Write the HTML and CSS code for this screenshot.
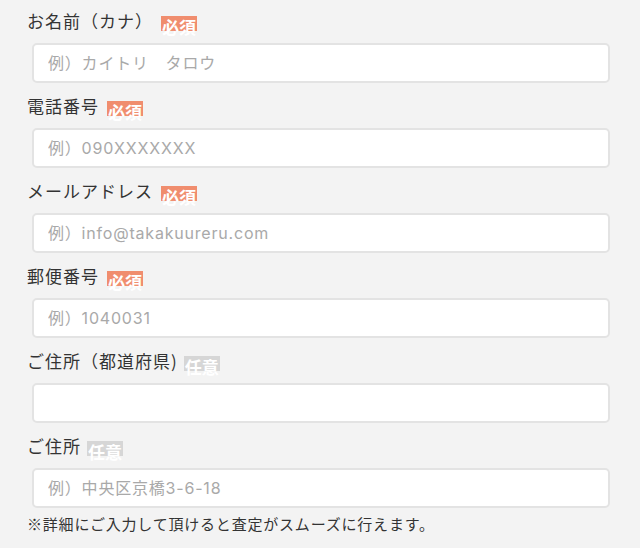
FILE: index.html
```html
<!DOCTYPE html>
<html lang="ja">
<head>
    <meta charset="UTF-8">
    <meta name="viewport" content="width=device-width, initial-scale=1.0">
    <title>お申し込みフォーム</title>
    <link rel="stylesheet" href="styles.css">
</head>
<body>
    <form class="form">
        <div class="field">
            <label class="label">お名前（カナ）<span class="badge req">必須</span></label>
            <input class="input" type="text" placeholder="例）カイトリ　タロウ">
        </div>
        <div class="field">
            <label class="label">電話番号<span class="badge req">必須</span></label>
            <input class="input" type="tel" placeholder="例）090XXXXXXX">
        </div>
        <div class="field">
            <label class="label">メールアドレス<span class="badge req">必須</span></label>
            <input class="input" type="email" placeholder="例）info@takakuureru.com">
        </div>
        <div class="field">
            <label class="label">郵便番号<span class="badge req">必須</span></label>
            <input class="input" type="text" placeholder="例）1040031">
        </div>
        <div class="field">
            <label class="label">ご住所（都道府県)<span class="badge opt">任意</span></label>
            <input class="input" type="text">
        </div>
        <div class="field">
            <label class="label">ご住所<span class="badge opt">任意</span></label>
            <input class="input" type="text" placeholder="例）中央区京橋3-6-18">
        </div>
        <p class="note">※詳細にご入力して頂けると査定がスムーズに行えます。</p>
    </form>
</body>
</html>
```

FILE: styles.css
```css
body { margin: 0; background: #f3f3f3; font-family: "Noto Sans CJK JP", "Noto Sans", sans-serif; color: #333; }
.form { padding: 11px 30px 0 27px; }
.field { margin-bottom: 13px; }
.label { display: block; font-size: 17px; line-height: 20px; height: 20px; margin-bottom: 12px; letter-spacing: 1px; white-space: nowrap; }
.badge { display: inline-block; vertical-align: top; height: 15px; line-height: 22px; margin-top: 5px; padding: 0 1px; font-size: 17px; font-weight: bold; letter-spacing: 0; color: #fff; }
.req { background: #f08d6e; margin-left: 8px; }
.opt { background: #d6d6d6; margin-left: 6px; }
.input { display: block; box-sizing: border-box; width: 578px; height: 40px; margin-left: 5px; padding: 0 14px; border: 2px solid #e3e3e3; border-radius: 5px; background: #fff; font-family: Inter, "Noto Sans CJK JP", sans-serif; font-size: 16px; letter-spacing: 0.8px; color: #333; outline: none; }
.input::placeholder { color: #a9a9a9; }
.note { margin: -8px 0 0; font-size: 15px; line-height: 22px; letter-spacing: 0.8px; }
```
